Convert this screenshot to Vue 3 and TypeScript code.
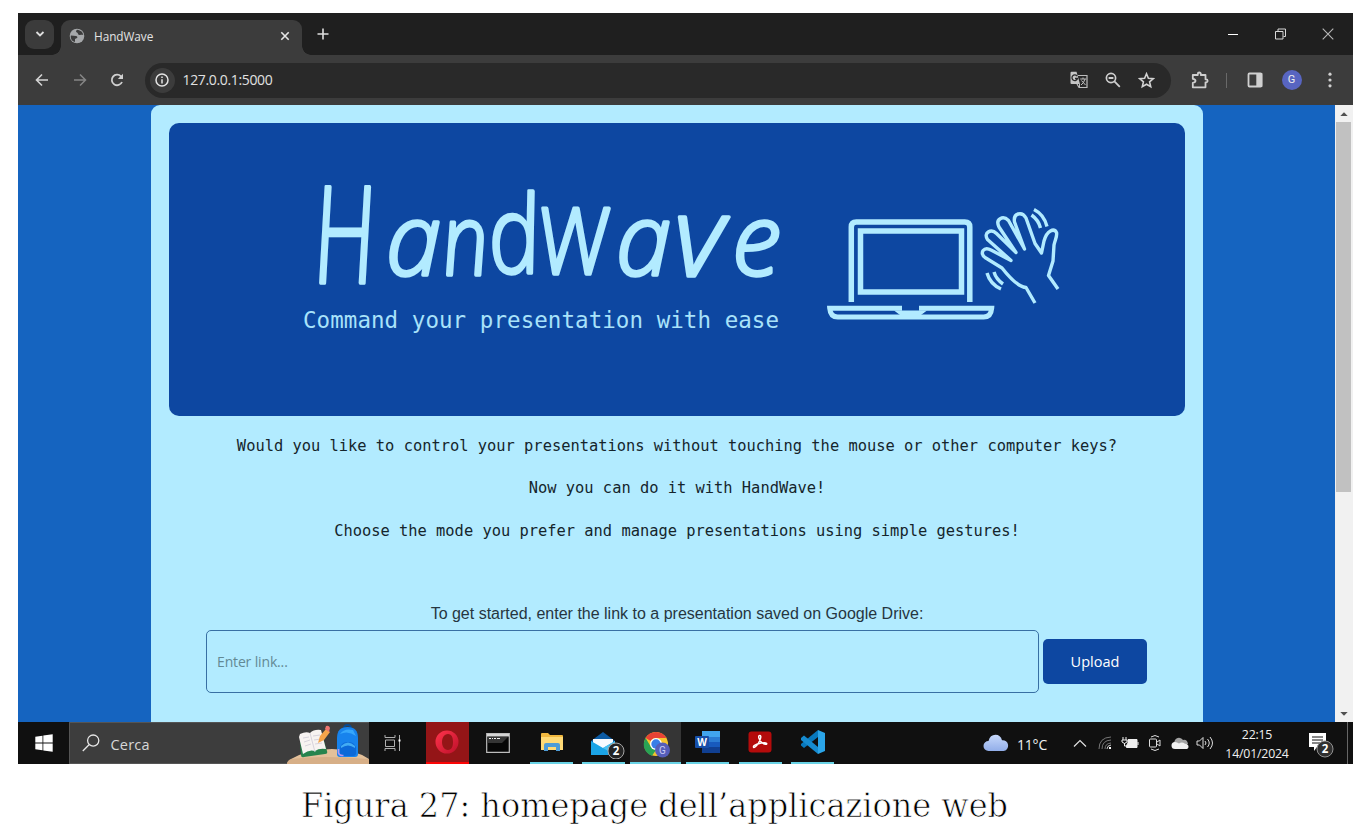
<script setup lang="ts">
interface TaskApp {
  id: string
  kind: string
}

interface BrandLetter {
  char: string
  x: number
  y: number
  size: number
  stretch: number
  skew: number
}

const brand: BrandLetter[] = [
  { char: 'H', x: 316, y: 283, size: 135, stretch: 0.68, skew: 5 },
  { char: 'a', x: 386, y: 275, size: 99, stretch: 1, skew: 0 },
  { char: 'n', x: 445, y: 275, size: 99, stretch: 0.83, skew: 6 },
  { char: 'd', x: 493, y: 273, size: 108, stretch: 0.84, skew: 9 },
  { char: 'W', x: 541, y: 274, size: 92, stretch: 0.91, skew: 7 },
  { char: 'a', x: 616, y: 275, size: 99, stretch: 1, skew: 0 },
  { char: 'v', x: 674, y: 276, size: 110, stretch: 1.04, skew: 0 },
  { char: 'e', x: 732, y: 275, size: 99, stretch: 1, skew: 0 },
]

const place = (l: BrandLetter): string =>
  `translate(${l.x} ${l.y}) skewX(${l.skew}) scale(${l.stretch} 1)`

const intro: string[] = [
  'Would you like to control your presentations without touching the mouse or other computer keys?',
  'Now you can do it with HandWave!',
  'Choose the mode you prefer and manage presentations using simple gestures!',
]

const apps: TaskApp[] = [
  { id: 'opera', kind: 'opera' },
  { id: 'cmd', kind: 'cmd' },
  { id: 'files', kind: 'running' },
  { id: 'mail', kind: 'running mail' },
  { id: 'chrome', kind: 'running active' },
  { id: 'word', kind: 'running word' },
  { id: 'acrobat', kind: 'running acrobat' },
  { id: 'code', kind: 'running code' },
]
</script>

<template>
  <figure class="figure">
    <div class="screen">
      <div class="tabs">
        <button class="tab-search">
          <svg width="10" height="8" viewBox="0 0 10 8"><path d="M1.5 2 5 5.5 8.500 2" fill="none" stroke="#dedede" stroke-width="1.800" /></svg>
        </button>
        <div class="tab">
          <svg width="16" height="16" viewBox="0 0 16 16">
            <circle cx="8" cy="8" r="7.300" fill="#a6a8aa" />
            <path d="M2 7.500 7 8c1 0 2 1 1 2l-2 1v3C3 13.500 1.700 11 1.700 8zM8 1.800C7 2.500 6.500 4 8 4.500s.2 1.600 1.800 2.300c1.500.8 2.500-.3 4.400.2C14 4.500 12 2.200 8 1.800z" fill="#3c3c3c" />
          </svg>
          <span class="tab-title">HandWave</span>
          <svg width="10" height="10" viewBox="0 0 10 10"><path d="M1.300 1.300 8.700 8.700M8.700 1.300 1.300 8.700" stroke="#e6e6e6" stroke-width="1.600" /></svg>
        </div>
        <svg class="plus" width="12" height="12" viewBox="0 0 12 12"><path d="M6 .5v11M.5 6h11" stroke="#dedede" stroke-width="1.600" /></svg>
        <div class="window-buttons">
          <svg width="12" height="12" viewBox="0 0 12 12"><path d="M1 6.500h10" stroke="#fff" /></svg>
          <svg width="12" height="12" viewBox="0 0 12 12"><path d="M.5 3.500h7.500V11H.5zM3 3V1h7.500v7.500H8.500" fill="none" stroke="#d8d8d8" /></svg>
          <svg width="12" height="12" viewBox="0 0 12 12"><path d="m.7.700 10.600 10.600M11.300.7.700 11.300" stroke="#b8b8b8" stroke-width="1.100" /></svg>
        </div>
      </div>

      <div class="toolbar">
        <svg class="nav" width="14" height="14" viewBox="0 0 14 14"><path d="M13 7H1.800M7 1.500 1.500 7 7 12.500" fill="none" stroke="#d4d4d4" stroke-width="1.600" /></svg>
        <svg class="nav" width="14" height="14" viewBox="0 0 14 14"><path d="M1 7h11.200M7 1.500 12.500 7 7 12.500" fill="none" stroke="#858585" stroke-width="1.500" /></svg>
        <svg class="nav" width="14" height="14" viewBox="0 0 14 14"><path d="M12 9A5.300 5.300 0 1 1 11 3.300L12 4.500" fill="none" stroke="#d0d0d0" stroke-width="1.800" /><path d="M13 .8V6H7.800z" fill="#d0d0d0" /></svg>
        <div class="address">
          <span class="info">
            <svg width="14" height="14" viewBox="0 0 14 14"><circle cx="7" cy="7" r="6" fill="none" stroke="#e4e4e4" stroke-width="1.500" /><path d="M7 6.200v4.200M7 3.500v1.600" stroke="#e4e4e4" stroke-width="1.500" /></svg>
          </span>
          <span class="url">127.0.0.1:5000</span>
          <svg class="translate" width="18" height="18" viewBox="0 0 18 18">
            <path d="M8 4.500h9v12H9L7 13" fill="none" stroke="#bdbdbd" stroke-width="1.200" />
            <path d="M1.500.8h5L10 13H1.500Q.5 13 .5 12V2Q.5.8 1.500.8z" fill="#c5c5c5" />
            <path d="M7 5A2.800 2.800 0 1 0 7.500 7.500H5" fill="none" stroke="#292929" stroke-width="1.300" />
            <path d="M10.200 8h6M13 6.500V8M15 8q-1 4-4 6M11.500 9.500l4 4.500M9.500 13v3" fill="none" stroke="#bdbdbd" />
          </svg>
          <svg class="zoomed" width="16" height="16" viewBox="0 0 16 16"><circle cx="6" cy="6" r="4.600" fill="none" stroke="#cecece" stroke-width="1.700" /><path d="M3.600 6h4.800M9.400 9.400l5.400 5.400" stroke="#cecece" stroke-width="1.800" /></svg>
          <svg width="17" height="17" viewBox="0 0 17 17"><path d="m8.500 1.800 1.900 4.500 4.900.4-3.700 3.200 1.100 4.800-4.200-2.500-4.200 2.500 1.100-4.800L1.700 6.700l4.900-.4z" fill="none" stroke="#d2d2d2" stroke-width="1.600" /></svg>
        </div>
        <svg class="puzzle" width="18" height="18" viewBox="0 0 18 18"><path d="M1.800 4h5V3a1.500 1.500 0 0 1 3 0v1h4.700v4.300h.6a1.500 1.500 0 0 1 0 3h-.6v5H1.800v-4.500q2.700-.3 2.700-2t-2.700-2z" fill="none" stroke="#cfcfcf" stroke-width="1.800" stroke-linejoin="round" /></svg>
        <span class="divider"></span>
        <svg class="panel" width="16" height="16" viewBox="0 0 16 16"><rect x="1.500" y="1.500" width="13" height="13" rx="1" fill="none" stroke="#d0d0d0" stroke-width="1.800" /><path d="M9.300 1h6v14h-6z" fill="#d0d0d0" /></svg>
        <span class="avatar">G</span>
        <svg class="dots" width="4" height="16" viewBox="0 0 4 16"><g fill="#d0d0d0"><circle cx="2" cy="2.200" r="1.600" /><circle cx="2" cy="8" r="1.600" /><circle cx="2" cy="13.800" r="1.600" /></g></svg>
      </div>

      <div class="viewport">
        <main class="card">
          <header class="banner">
            <svg width="1016" height="293" viewBox="169 123 1016 293">
              <g class="brand">
                <text v-for="(l, i) in brand" :key="i" :font-size="l.size" :transform="place(l)">{{ l.char }}</text>
              </g>
              <text class="tagline" x="303" y="327.500" textLength="476">Command your presentation with ease</text>
              <g fill="none" stroke="#b2ebff">
                <path d="M851.300 302v-75q0-5 5-5h108.500q5 0 5 5v75" stroke-width="5.500" />
                <path d="M860.500 231h101v61h-101z" stroke-width="5.500" />
                <path d="M902 308.200H829.700q.7 8.800 8 8.800h146q7.300 0 8-8.800H919" stroke-width="5" />
                <path d="M900 312.500h21l-4 3h-13z" stroke-width="4" />
                <g stroke-width="3.400" stroke-linejoin="round">
                  <path d="M1035 303 1026 287.500Q1017 287 1002 268L985 257.500C979 253 984 246 991 250L1011 260.500 987.500 239.500C983 233 991 228 996.500 233.500L1016 252.500 999 227C995 219 1003 215 1008.500 220.500L1024.500 249 1014.500 222C1013 213 1022 211 1026 218L1035 243.500 1041.500 253 1044 241C1047 230 1054 228 1056.500 232.500 1057.500 236 1055 240 1054 245L1053 261 1048.500 275.500 1058 289" />
                  <path d="M987 273q3 11 14 16M994 272q2 7 9 12M1031.500 215q7 5 9 13M1034 209.500q10 5 13 17" />
                </g>
              </g>
            </svg>
          </header>
          <section class="intro">
            <p v-for="line in intro" :key="line">{{ line }}</p>
          </section>
          <p class="label">To get started, enter the link to a presentation saved on Google Drive:</p>
          <form class="form" @submit.prevent>
            <input type="text" placeholder="Enter link..." />
            <button>Upload</button>
          </form>
        </main>
        <div class="scrollbar">
          <svg width="10" height="6" viewBox="0 0 10 6"><path d="M1.300 5 5 1.200 8.700 5z" fill="#505050" /></svg>
          <span class="thumb"></span>
          <svg class="down" width="10" height="6" viewBox="0 0 10 6"><path d="M1.300 1 5 4.800 8.700 1z" fill="#505050" /></svg>
        </div>
      </div>

      <div class="taskbar">
        <div class="start">
          <svg width="18" height="18" viewBox="0 0 18 18"><path d="M.3 2.700 7.500 1.700v6.900H.3zM8.300 1.600 17.700.3v8.300H8.300zM.3 9.400h7.200v6.900L.3 15.300zM8.300 9.400h9.400v8.300l-9.400-1.300z" fill="#fff" /></svg>
        </div>
        <div class="search">
          <svg width="18" height="18" viewBox="0 0 18 18"><circle cx="11.200" cy="6.600" r="5.600" fill="none" stroke="#e8e8e8" stroke-width="1.300" /><path d="M7 10.700.8 17" stroke="#e8e8e8" stroke-width="1.300" /></svg>
          <span>Cerca</span>
          <svg class="scene" width="82" height="41" viewBox="0 0 82 41">
            <path d="M0 41q0-3 4-5Q22 26 45 26q22 0 37 10v5z" fill="#e3c09a" />
            <path d="M0 41q0-3 4-5 30-4 78 0v5z" fill="#cfa47c" opacity=".6" />
            <path d="m13 17 1 15q0 3 3 2l21-3q3 0 2-3l-5-17z" fill="#27844d" />
            <path d="m12 14 1-3q6-3 10-1 4-4 11-3l5 19q-7-1-11 2-6-2-12 3z" fill="#f7f3f1" />
            <path d="m23 10 5 19M16 15l6-1M17 19l6-2M18 23l6-2M26 13l7-1M27 17l7-1M28 21l7-1" stroke="#d2ced8" stroke-width=".9" />
            <path d="m31 20 2-7 6-7 4 3-6 8z" fill="#f5a44a" /><path d="m38 6 1-3q3-1 4 2l-1 4z" fill="#ee7570" />
            <path d="M57 6q0-4 3.500-4t3.500 4" fill="none" stroke="#074a91" stroke-width="2" />
            <path d="M50 15q0-11 10.500-11T71 15v16q0 3-3 3H53q-3 0-3-3z" fill="#1783ed" />
            <path d="M53 11q4-6 13-4l3 6q-8-6-16-2z" fill="#36a7fb" />
            <path d="M53 27q0-8 8-8t8 8v3q0 3-3 3H56q-3 0-3-3z" fill="#0c69d8" />
            <path d="M54 23q7-7 14 0v2q-7-5-14 0z" fill="#42acf4" />
            <path d="M51.500 26v4q1 3 5 2.500" fill="none" stroke="#b595ef" stroke-width="1.600" />
          </svg>
        </div>
        <div class="taskview">
          <svg width="18" height="18" viewBox="0 0 18 18"><path d="M1 1v2.500h10V1M1 17v-2.500h10V17M1.500 6h9v6.500h-9zM15.500 1v16" fill="none" stroke="#b0b0b0" /><path d="M14.500 5.500h2v2h-2z" fill="#fff" /></svg>
        </div>
        <div v-for="app in apps" :key="app.id" class="app" :class="app.kind">
          <svg v-if="app.id === 'opera'" width="24" height="24" viewBox="0 0 24 24">
            <defs><linearGradient id="op" x2="1" y2="1"><stop stop-color="#ff344c" /><stop offset="1" stop-color="#bd102a" /></linearGradient></defs>
            <path fill-rule="evenodd" d="M12 .5a11.500 11.500 0 1 0 0 23 11.500 11.500 0 1 0 0-23zm1 3.500c4 0 5 4 5 8s-1 8-5 8c-4 0-6-4-6-8s2-8 6-8z" fill="url(#op)" />
          </svg>
          <svg v-else-if="app.id === 'cmd'" width="24" height="20" viewBox="0 0 24 20">
            <path d="M.7.700h22.600v18.600H.7z" fill="#070707" stroke="#bdbdbd" stroke-width="1.200" /><path d="M1 1h22v2.500H1z" fill="#d5d5d5" /><path d="m2 4h20l-6 6H2z" fill="#353535" /><path d="M3 5.500h2m1 0h1m1 0h2m1 0h3" stroke="#f2f2f2" />
          </svg>
          <svg v-else-if="app.id === 'files'" width="24" height="20" viewBox="0 0 24 20">
            <path d="M1 2q0-1 1-1h6l2 2h12q1 0 1 1v14H1z" fill="#f1b83f" /><path d="M1 5h22v13H1z" fill="#ffda76" /><path d="M4 19v-6q0-2 2-2h12q2 0 2 2v6h-4v-4H8v4z" fill="#4d9cd8" />
          </svg>
          <svg v-else-if="app.id === 'mail'" width="36" height="28" viewBox="0 0 36 28">
            <path d="M1 10 13 1l12 9v14H1z" fill="#0c5ba4" /><path d="M3 8h20v9H3z" fill="#f8fbff" /><path d="m1 10 12 7 12-7v14H1z" fill="#1ba4e6" /><path d="m13 17 12-7v14z" fill="#4cc2f2" />
            <circle cx="26" cy="20" r="8" fill="#242424" stroke="#a5a5a5" /><text x="26" y="24" class="badge">2</text>
          </svg>
          <svg v-else-if="app.id === 'chrome'" width="28" height="28" viewBox="0 0 28 28">
            <circle cx="13" cy="13" r="12" fill="#f6c52e" /><path d="M2.600 7A12 12 0 0 1 23.400 7H13a6 6 0 0 0-5.200 3z" fill="#e94335" /><path d="M2.600 7 8 16l5 3-4 5.800A12 12 0 0 1 2.600 7z" fill="#29a354" /><circle cx="13" cy="13" r="6" fill="#fff" /><circle cx="13" cy="13" r="4.700" fill="#397ee8" /><circle cx="19.500" cy="19" r="7.500" fill="#555eb9" /><text x="19.500" y="22.500" class="chrome-user">G</text>
          </svg>
          <svg v-else-if="app.id === 'word'" width="26" height="24" viewBox="0 0 26 24">
            <path d="M7 1h17q1 0 1 1v20q0 1-1 1H7z" fill="#185abd" /><path d="M7 1h18v6H7z" fill="#41a5ee" /><path d="M7 7h18v5H7z" fill="#2b7cd3" /><path d="M7 17h18v5q0 1-1 1H7z" fill="#103f91" /><rect x="0" y="6" width="14" height="12" rx="1" fill="#174fa9" /><text x="7" y="15.500" class="word-mark">W</text>
          </svg>
          <svg v-else-if="app.id === 'acrobat'" width="24" height="22" viewBox="0 0 24 22">
            <rect x=".5" y=".5" width="23" height="21" rx="3" fill="#b40b0b" /><path d="M11.500 4.500c2.500-.5 1 4-1 7.500-2 3.600-5.500 6-5 3.500.4-2 11-5 13-3.300 1.500 1.800-3 1.300-5.300-1.200-2.200-2.300-3.500-6.200-1.700-6.500z" fill="none" stroke="#fff" stroke-width="1.400" />
          </svg>
          <svg v-else width="26" height="26" viewBox="0 0 26 26">
            <path d="M18 1v7L4 19l-3-2.500V15z" fill="#0878bd" /><path d="M1 9l3-2.500L18 18v7L1 11z" fill="#168bd0" /><path d="m18 1 7 3v18l-7 3z" fill="#2ba5e9" />
          </svg>
        </div>

        <div class="weather">
          <svg width="26" height="18" viewBox="0 0 26 18">
            <defs><linearGradient id="cl" x2="0" y2="1"><stop stop-color="#c6d8fb" /><stop offset="1" stop-color="#92aee9" /></linearGradient></defs>
            <path d="M5.500 17a5 5 0 0 1 0-10Q7 .8 12.500.8q5 0 6.500 5.500a5.400 5.400 0 0 1 1.500 10.700z" fill="url(#cl)" />
          </svg>
          <span>11°C</span>
        </div>
        <div class="tray">
          <svg width="14" height="9" viewBox="0 0 14 9"><path d="M1 7.500 7 1.500l6 6" fill="none" stroke="#e2e2e2" stroke-width="1.200" /></svg>
          <svg width="14" height="14" viewBox="0 0 14 14"><path d="M1 13Q1 1.500 13 1M4 13q0-8.500 9-9M7 13q0-5.500 6-6" fill="none" stroke="#777" /><path d="M9 13q0-3.500 4-4" fill="none" stroke="#ccc" /><path d="M11 11h2v2h-2z" fill="#fff" /></svg>
          <svg width="18" height="14" viewBox="0 0 18 14"><path d="M7 3.500h9v8H5.500V9.500L7 7z" fill="#eee" stroke="#eee" /><path d="M17 6v3M2 1v3M5 1v3M1 4h5v2q-2.500 3-5 0zM3.500 7v3H6" fill="none" stroke="#eee" /></svg>
          <svg width="14" height="18" viewBox="0 0 14 18"><rect x="1.500" y="5" width="7" height="8" rx="1" fill="none" stroke="#ddd" /><path d="M9 8l3-2v6L9 10M3 3q4-3 8 0M3 15q4 3 8 0" fill="none" stroke="#ddd" /></svg>
          <svg width="18" height="13" viewBox="0 0 18 13"><path d="M4 8a4.500 4.500 0 0 1 8-5q4-1 5 4l-6 2z" fill="#a4a4a4" /><path d="M4 12a3.500 3.500 0 0 1 0-7q2 0 4 1.500 3-2 6 .2 3.500.4 3.500 3T14 12z" fill="#f1f1f1" /></svg>
          <svg width="17" height="14" viewBox="0 0 17 14"><path d="M1 5h2.500L7 1.500v11L3.500 9H1zM9 5q2 2 0 4M11.500 3q3.500 4 0 8M14 1q5 6 0 12" fill="none" stroke="#ddd" /></svg>
        </div>
        <div class="clock"><span>22:15</span><span>14/01/2024</span></div>
        <div class="notice">
          <svg width="26" height="28" viewBox="0 0 26 28"><path d="M1 2h17v14H9l-3 4v-4H1z" fill="#fff" /><path d="M4 6h11M4 9h11M4 12h8" stroke="#111" /><circle cx="17" cy="18" r="8" fill="#303030" stroke="#929292" /><text x="17" y="22" class="badge">2</text></svg>
        </div>
        <span class="desktop"></span>
      </div>
    </div>
    <figcaption>
      <svg width="740" height="60" viewBox="0 0 740 60"><text x="11" y="47.500" textLength="707" lengthAdjust="spacingAndGlyphs">Figura 27: homepage dell’applicazione web</text></svg>
    </figcaption>
  </figure>
</template>

<style>
body { background: #fff; }
</style>

<style scoped>
* { box-sizing: border-box; }
.figure { margin: 0; padding: 13px 12px 0 18px; width: 1365px; height: 830px; font-family: "Open Sans", "Noto Sans", sans-serif; }
.screen { width: 1335px; height: 751px; overflow: hidden; background: #3c3c3c; }
svg { display: block; flex: none; }
button { border: 0; padding: 0; font: inherit; }
.tabs { display: flex; height: 42px; background: #1f1f1f; align-items: center; padding-left: 7px; }
.tab-search { display: grid; place-items: center; width: 29px; height: 29px; border-radius: 9px; background: #3b3b3b; }
.tab { position: relative; display: flex; align-items: center; width: 241px; height: 35px; margin: 7px 0 0 7px; padding: 0 12px 4px 8px; background: #3c3c3c; border-radius: 9px 9px 0 0; }
.tab::before, .tab::after { content: ""; position: absolute; bottom: 0; width: 9px; height: 9px; }
.tab::before { left: -9px; background: radial-gradient(circle at 0 0, transparent 8.500px, #3c3c3c 9px); }
.tab::after { right: -9px; background: radial-gradient(circle at 100% 0, transparent 8.500px, #3c3c3c 9px); }
.tab-title { flex: 1; margin-left: 9px; color: #e4e4e4; font-size: 11.800px; letter-spacing: -.05px; }
.plus { margin-left: 15px; }
.window-buttons { display: flex; gap: 35.500px; margin-left: auto; margin-right: 19px; }
.toolbar { display: flex; align-items: center; height: 50px; padding-left: 17px; background: #3c3c3c; }
.nav { margin-right: 23.500px; }
.address { display: flex; align-items: center; width: 1026px; height: 35px; margin-left: -3px; padding: 0 16px 0 5px; background: #292929; border-radius: 18px; }
.info { display: grid; place-items: center; width: 25px; height: 25px; border-radius: 50%; background: #3c3c3c; }
.url { margin-left: 8px; padding-bottom: 2px; font-size: 14px; letter-spacing: -.35px; color: #e1e1e1; }
.translate { margin-left: auto; }
.zoomed { margin: 0 17px; }
.puzzle { margin-left: 20px; }
.divider { width: 1px; height: 15px; margin: 0 20px 0 17px; background: #696969; }
.avatar { width: 20px; height: 20px; margin: 0 26px 0 19px; border-radius: 50%; background: #5865c1; color: #eee; font: 11px/20px "Roboto", sans-serif; text-align: center; }
.viewport { position: relative; height: 617px; background: #1564c0; overflow: hidden; }
.card { width: 1052px; height: 630px; margin-left: 133px; padding: 18px 18px 0; background: #b2ebff; border-radius: 9px 9px 0 0; }
.banner { height: 293px; background: #0d47a1; border-radius: 10px; overflow: hidden; }
.brand { font-family: "Open Sans", "Noto Sans", sans-serif; font-style: italic; font-weight: 300; fill: #b2ebff; stroke: #b2ebff; stroke-width: 3.500px; stroke-linejoin: round; }
.tagline { font: 22.500px "DejaVu Sans Mono", monospace; fill: #a8e2fa; }
.intro { height: 146px; padding-top: 19px; text-align: center; color: #15252c; font: 15.400px/22px "DejaVu Sans Mono", monospace; }
.intro p { margin: 0 0 20.300px; white-space: nowrap; }
.label { margin: 42px 0 6px; text-align: center; color: #26363f; font: 16px/20px "Liberation Sans", Arial, sans-serif; }
.form { display: flex; align-items: center; gap: 4px; padding-left: 37px; }
.form input { width: 833px; height: 63px; border: 1px solid #386fa3; border-radius: 5px; background: transparent; padding: 0 10px; font: 14px "Open Sans", sans-serif; letter-spacing: -.15px; }
.form input::placeholder { color: #638994; opacity: 1; }
.form button { width: 104px; height: 45px; border-radius: 5px; background: #0d47a1; color: #fff; font-size: 14.500px; }
.scrollbar { position: absolute; right: 0; top: 0; bottom: 0; width: 18px; padding-top: 6px; display: flex; flex-direction: column; align-items: center; background: #f1f1f1; }
.scrollbar svg { margin-right: 1px; }
.thumb { width: 15px; height: 370px; margin-top: 5px; margin-right: 1px; background: #c1c1c1; }
.down { margin-top: auto; margin-bottom: 5px; }
.taskbar { display: flex; height: 42px; background: #101010; color: #f0f0f0; }
.start { width: 51px; display: flex; align-items: center; padding-left: 17px; }
.search { display: flex; align-items: center; width: 300px; padding-left: 12px; background: #3d3d3d; border: 1px solid #555; border-right: 0; font-size: 14.500px; }
.search span { margin-left: 10.500px; color: #d8d8d8; padding-top: 3px; letter-spacing: .2px; }
.scene { margin-left: auto; }
.taskview { width: 57px; display: flex; align-items: center; padding-left: 15px; }
.app { position: relative; display: grid; place-items: center; width: 43px; height: 42px; }
.opera { background: #941517; border-bottom: 2px solid #fb0505; }
.opera svg { margin-right: 2px; }
.cmd { width: 61px; padding-right: 3px; }
.running { border-bottom: 2px solid #69d2e5; }
.mail { margin: 0 5px 0 9px; }
.mail svg { margin-left: 8px; margin-top: 5px; }
.active { width: 51px; background: #353535; margin-right: 5px; }
.active svg { margin-top: 5px; margin-left: 2px; }
.acrobat { margin: 0 9px 0 10px; }
.acrobat svg { margin-right: 2px; }
.badge { font: bold 11.500px "Open Sans", sans-serif; text-anchor: middle; fill: #fff; }
.chrome-user { font: 10px Roboto, sans-serif; text-anchor: middle; fill: #c8cbf4; }
.word-mark { font: bold 10px "Open Sans", sans-serif; text-anchor: middle; fill: #fff; }
.weather { display: flex; align-items: center; gap: 8px; margin-left: auto; width: 84px; font-size: 14px; letter-spacing: -.2px; }
.weather span { padding-top: 2px; }
.tray { display: grid; grid-template-columns: repeat(6, 25px); width: 150px; align-items: center; justify-items: center; }
.clock { display: flex; flex-direction: column; justify-content: center; width: 80px; text-align: center; font-size: 12.300px; line-height: 19px; letter-spacing: -.2px; padding-top: 1px; }
.notice { width: 50px; display: flex; align-items: center; padding: 4px 0 0 11px; }
.desktop { width: 6px; border-left: 1px solid #666; }
figcaption { padding-left: 272px; padding-top: 5px; }
figcaption text { font: 33px "DejaVu Serif", serif; fill: #000; stroke: #fff; stroke-width: .75px; }
</style>
